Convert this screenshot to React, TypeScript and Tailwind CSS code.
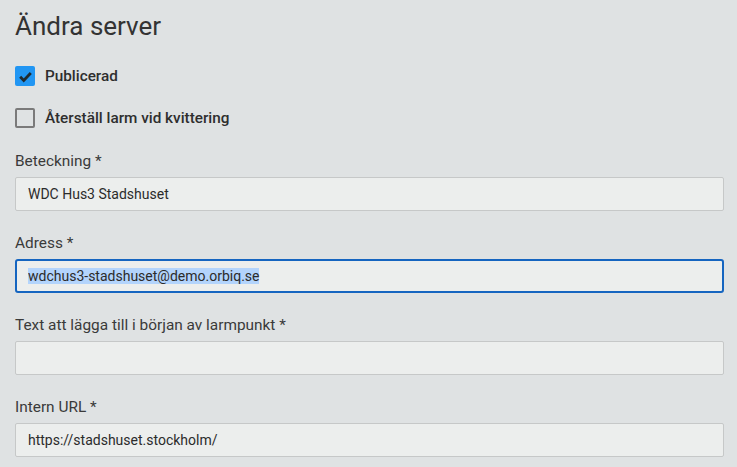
import { useEffect, useRef } from "react"

function Field({ label, value, focused }: { label: string; value: string; focused?: boolean }) {
  const ref = useRef<HTMLInputElement>(null)

  useEffect(() => {
    if (focused && ref.current) {
      ref.current.focus()
      ref.current.select()
    }
  }, [focused])

  return (
    <div className="flex flex-col">
      <label className="h-[22px] text-[15.4px] leading-[22px] text-[#3a3a3a]">{label}</label>
      <input
        ref={ref}
        readOnly
        defaultValue={value}
        className={
          focused
            ? "mt-[5px] h-[34px] w-full rounded-[3px] border-2 border-[#1565c0] bg-[#eceeed] px-[11px] text-[14px] text-[#2b2b2b] outline-none selection:bg-[#b3d4fc]"
            : "mt-[5px] h-[34px] w-full rounded-[2px] border border-[#c6c8c8] bg-[#eceeed] px-[12px] text-[14px] text-[#2b2b2b] outline-none"
        }
      />
    </div>
  )
}

function Check({ checked, label }: { checked: boolean; label: string }) {
  return (
    <div className="flex h-[20px] items-center gap-[10px]">
      {checked ? (
        <span className="flex h-[20px] w-[20px] items-center justify-center rounded-[2px] bg-[#2196f3]">
          <svg viewBox="0 0 24 24" className="h-[17px] w-[17px]" fill="none" stroke="#1f2a30" strokeWidth="4">
            <path d="M4.5 12.5l5 5L19.5 7" />
          </svg>
        </span>
      ) : (
        <span className="h-[20px] w-[20px] rounded-[2px] border-2 border-[#7a7a7a]" />
      )}
      <span className="text-[15.3px] font-medium text-[#2e2e2e]">{label}</span>
    </div>
  )
}

export default function App() {
  return (
    <div
      className="min-h-screen w-full bg-[#dfe2e3] px-[15px] pt-[10px]"
      style={{ fontFamily: "Roboto, 'Liberation Sans', sans-serif" }}
    >
      <h1 className="text-[26px] leading-[32px] text-[#333]">Ändra server</h1>
      <div className="mt-[24px] flex flex-col gap-[22px]">
        <Check checked label="Publicerad" />
        <Check checked={false} label="Återställ larm vid kvittering" />
      </div>
      <div className="mt-[22px] flex w-[709px] flex-col gap-[21px]">
        <Field label="Beteckning *" value="WDC Hus3 Stadshuset" />
        <Field label="Adress *" value="wdchus3-stadshuset@demo.orbiq.se" focused />
        <Field label="Text att lägga till i början av larmpunkt *" value="" />
        <Field label="Intern URL *" value="https://stadshuset.stockholm/" />
      </div>
    </div>
  )
}
